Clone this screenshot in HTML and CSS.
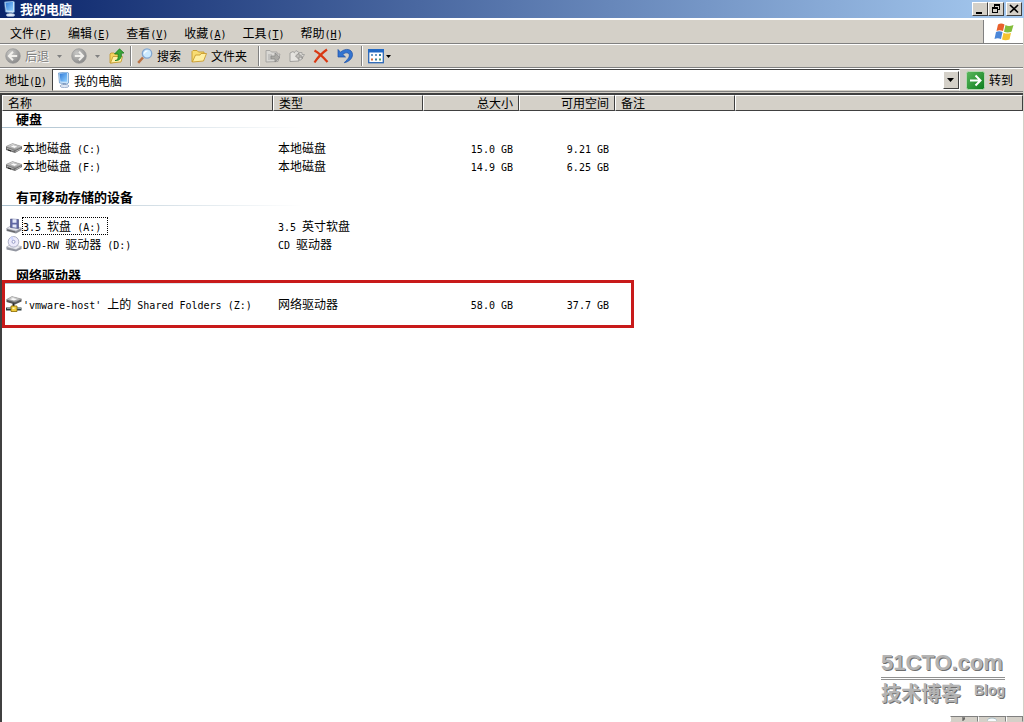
FILE: index.html
```html
<!DOCTYPE html>
<html lang="zh-CN">
<head>
<meta charset="utf-8">
<title>我的电脑</title>
<link rel="stylesheet" href="styles.css">
</head>
<body>
<svg class="defs" aria-hidden="true">
  <defs>
    <linearGradient id="screen" x1="0" y1="0" x2="1" y2="1"><stop offset="0" stop-color="#2f78d6"/><stop offset="1" stop-color="#8fd0ff"/></linearGradient>
    <radialGradient id="ball" cx=".35" cy=".3" r=".8"><stop offset="0" stop-color="#c8c8c6"/><stop offset="1" stop-color="#858585"/></radialGradient>
    <linearGradient id="go" x1="0" y1="0" x2="1" y2="1"><stop offset="0" stop-color="#5cb85e"/><stop offset="1" stop-color="#0c7d1d"/></linearGradient>
    <linearGradient id="metal" x1="0" y1="0" x2="0" y2="1"><stop offset="0" stop-color="#e6e6e6"/><stop offset="1" stop-color="#909090"/></linearGradient>
    <symbol id="pc" viewBox="0 0 16 16">
      <path d="M2.500 1L11 0l1.500 1v10l-2 1-7-1z" fill="#c9e2f8" stroke="#5e8fc4" stroke-width=".7"/>
      <path d="M3.500 1.800l7.500-1v9L4.500 9.500z" fill="url(#screen)"/>
      <path d="M7 11l3 .5V13H7z" fill="#7d97bd"/>
      <ellipse cx="8.500" cy="14" rx="4.500" ry="1.600" fill="#dfe8f5" stroke="#7f98bd" stroke-width=".7"/>
    </symbol>
    <symbol id="drive" viewBox="0 0 16 16">
      <path d="M0 6.500L6.500 3.500 16 6.500V9L9 13 0 10z" fill="#6d6d6d"/>
      <path d="M0 6.500L6.500 3.500 16 6.500 9 10z" fill="url(#metal)" stroke="#979797" stroke-width=".5"/>
      <path d="M4 6.500l3.500-1.500 4.500 1.400-3.500 1.800z" fill="#fafafa" stroke="#a7a7a7" stroke-width=".5"/>
      <path d="M1 8.300l6.500 2.300M9.500 11.500L15 8.700" stroke="#c4c4c4" stroke-width=".8"/>
      <path d="M2 10l3 1" stroke="#222" stroke-width="1"/>
    </symbol>
    <symbol id="floppy" viewBox="0 0 16 16">
      <path d="M.5 10.500l4-2.500 11 2v2.500L10 15.500.5 13z" fill="#8c8f99"/>
      <path d="M.5 10.500l4-2.500 11 2-5.500 3z" fill="#e8e8ee" stroke="#a5a7b4" stroke-width=".5"/>
      <path d="M4.500 1l8 .5v9l-8-1z" fill="#6067a4" stroke="#414879" stroke-width=".6"/>
      <path d="M6.500 1.200h4v3.500h-4zM6.500 6.500h4v3.300l-4-.5z" fill="#e6eafa"/>
      <path d="M1 12l8 2" stroke="#555" stroke-width=".8"/>
    </symbol>
    <symbol id="disc" viewBox="0 0 16 16">
      <path d="M.5 11l4-2.500 11 2V13L10 15.500.5 13.500z" fill="#9295a0"/>
      <path d="M.5 11l4-2.500 11 2L10 13.500z" fill="#ececf1" stroke="#a5a7b4" stroke-width=".5"/>
      <circle cx="7.500" cy="5.800" r="5.300" fill="#eceafb" stroke="#9a9eb8" stroke-width=".8"/>
      <path d="M7.500 5.800L4 1.800a5 5 0 0 1 3-1.200z" fill="#cfd6ff"/>
      <circle cx="7.500" cy="5.800" r="1.500" fill="#fff" stroke="#8288ba" stroke-width=".8"/>
    </symbol>
    <symbol id="netdrive" viewBox="0 0 16 16">
      <path d="M.5 3.500L6 .5 15.500 3v2.500L9 8.500.5 6z" fill="#555"/>
      <path d="M.5 3.500L6 .5 15.500 3 9 6z" fill="url(#metal)" stroke="#999" stroke-width=".5"/>
      <path d="M4 3.300l3-1.300 4 1.200-3 1.300z" fill="#fafafa"/>
      <path d="M7.500 7.500v4" stroke="#222" stroke-width="2"/>
      <path d="M0 13h15.500" stroke="#2d3b3d" stroke-width="3"/>
      <path d="M1 12.500h14" stroke="#8da3a0" stroke-width="1"/>
      <path d="M5 10h6v5.500H5z" fill="#f2cd3a" stroke="#8a6900" stroke-width=".8"/>
      <path d="M6.500 11.500h2v1.500h-2z" fill="#fff6bc"/>
    </symbol>
    <symbol id="back" viewBox="0 0 16 16">
      <circle cx="8" cy="8" r="7.300" fill="url(#ball)" stroke="#969696" stroke-width=".7"/>
      <path d="M8 3.800L3.900 8 8 12.200M4.300 8h7.900" fill="none" stroke="#f1f0ec" stroke-width="2"/>
    </symbol>
    <symbol id="forward" viewBox="0 0 16 16">
      <circle cx="8" cy="8" r="7.300" fill="url(#ball)" stroke="#969696" stroke-width=".7"/>
      <path d="M8 3.800L12.100 8 8 12.200M3.800 8h7.900" fill="none" stroke="#f1f0ec" stroke-width="2"/>
    </symbol>
    <symbol id="folder" viewBox="0 0 16 16">
      <path d="M1 14V3.500l1-1h4L7.500 4H13v3" fill="#f8dc72" stroke="#c69a29" stroke-width=".9"/>
      <path d="M1.300 14L4.500 7H9l1-1.500h5.500L12.500 13z" fill="#fff0a3" stroke="#c99b2b" stroke-width=".9"/>
    </symbol>
    <symbol id="upfolder" viewBox="0 0 16 16">
      <path d="M1 15V6l1-1h3l1 1h6v7L2 15z" fill="#f3d45f" stroke="#c0952a" stroke-width=".8"/>
      <path d="M1.500 15L4 8.500h9.500L12 14z" fill="#fff1a5" stroke="#c0952a" stroke-width=".8"/>
      <path d="M6 12.500c3 0 3.500-3 3-6.500H5.500L10.500.8 15 5l-2.800.3c.8 4-1 7.700-6.200 7.200z" fill="#3aa637" stroke="#14751a" stroke-width=".7"/>
    </symbol>
    <symbol id="search" viewBox="0 0 16 16">
      <path d="M1.200 14.800L6 9.500" stroke="#ba7245" stroke-width="2.500"/>
      <circle cx="10" cy="5.500" r="4.700" fill="#cbeaff" stroke="#84a6cf" stroke-width="1.300"/>
      <path d="M7.500 5.500a2.700 2.700 0 0 1 3-2.500" fill="none" stroke="#fff" stroke-width="1.200"/>
    </symbol>
    <symbol id="moveto" viewBox="0 0 16 16">
      <path d="M1 14V2.500h4L6.500 4H12v2h3l-2 7.500z" fill="#d9d8d4" stroke="#a3a29f" stroke-width=".9"/>
      <path d="M3 7h4M3 9h3M3 11h3" stroke="#aaa"/>
      <path d="M6 8h4V5l5 4.500-5 4.500v-3H6z" fill="#aaa9a5" stroke="#858482" stroke-width=".7"/>
    </symbol>
    <symbol id="copyto" viewBox="0 0 16 16">
      <path d="M1 13.500V5l3-1.500 2 1.700h2.500L10 13z" fill="#e6e4e0" stroke="#9b9a97" stroke-width=".9"/>
      <path d="M5 5l2-2.500 3 2h3v2h2.500L12 12H9" fill="#dedcd8" stroke="#a3a29f" stroke-width=".9"/>
      <path d="M6.500 8L10 5v2c2.500 0 3.500 1.200 3.500 3.500C12.500 9.300 11.500 9 10 9v2.500z" fill="#bdbbb7" stroke="#858482" stroke-width=".7"/>
    </symbol>
    <symbol id="delete" viewBox="0 0 16 16">
      <path d="M1.500 2.500C6 5 11 10 14.500 14M14 1.500C9 5 5 9 1.500 14.500" fill="none" stroke="#d93812" stroke-width="2.200"/>
    </symbol>
    <symbol id="undo" viewBox="0 0 16 16">
      <path d="M1 1.500V9h7.500L5.800 6.500C9 3.500 13 5 12.300 8c-.5 3-3 4-5 6.700 4-.7 8.300-4 8.200-8.200C15.300 1 8.500-.5 3.500 4.200z" fill="#3374d0" stroke="#1d4fa3" stroke-width=".7"/>
    </symbol>
    <symbol id="views" viewBox="0 0 16 16">
      <rect x=".7" y="1.700" width="14.600" height="13" fill="#fff" stroke="#2a66b5" stroke-width="1.300"/>
      <path d="M0 1h16v3.500H0z" fill="#2369c4"/>
      <path d="M3 6h2v2H3zM7 6h2v2H7z" fill="#6d9ac6"/><path d="M11 6h2v2h-2zM7 10.500h2v2H7z" fill="#387da0"/>
      <path d="M3 10.500h2v2H3z" fill="#d1693c"/><path d="M11 10.500h2v2h-2z" fill="#52a060"/>
    </symbol>
    <symbol id="caret" viewBox="0 0 5 3"><path d="M0 0h5L2.500 3z" fill="currentColor"/></symbol>
  </defs>
</svg>

<main class="window">
  <header class="titlebar">
    <svg class="icon"><use href="#pc"/></svg>
    <h1 class="caption">我的电脑</h1>
    <div class="sysbuttons">
      <button class="sysbtn" aria-label="最小化"><svg viewBox="0 0 12 10"><path d="M2 8h6v2H2z"/></svg></button>
      <button class="sysbtn" aria-label="还原"><svg viewBox="0 0 12 10"><path d="M4 0h6v6H8V5h1V2H5v1H4zM2 3h6v6H2zM3 5v3h4V5z" fill-rule="evenodd"/></svg></button>
      <button class="sysbtn close" aria-label="关闭"><svg viewBox="0 0 12 10"><path d="M2 1l8 7.500M10 1L2 8.500" stroke="#000" stroke-width="1.700"/></svg></button>
    </div>
  </header>

  <nav class="menubar">
    <button class="menu">文件<span class="latin">(<u>F</u>)</span></button>
    <button class="menu">编辑<span class="latin">(<u>E</u>)</span></button>
    <button class="menu">查看<span class="latin">(<u>V</u>)</span></button>
    <button class="menu">收藏<span class="latin">(<u>A</u>)</span></button>
    <button class="menu">工具<span class="latin">(<u>T</u>)</span></button>
    <button class="menu">帮助<span class="latin">(<u>H</u>)</span></button>
    <div class="brand">
      <svg class="flag" viewBox="0 0 20 18">
        <path d="M4 1.500q3-2 6.500 0L9 8q-3.500-1.700-6.500 0z" fill="#e8602c"/>
        <path d="M11.500 2q3 1.800 8 0L17.500 8.700q-4 1.500-7.500 0z" fill="#83bd3b"/>
        <path d="M2 9q3-1.500 6.500 0L7 16Q3.500 14.300.5 16z" fill="#4a86d8"/>
        <path d="M9.500 9.700q3.500 1.800 7.500 0L15.500 16.500q-4 1.500-7.500 0z" fill="#f5c330"/>
      </svg>
    </div>
  </nav>

  <div class="toolbar">
    <button class="tool off" disabled><svg class="icon"><use href="#back"/></svg>后退</button>
    <button class="drop off" disabled aria-label="后退列表"><svg><use href="#caret"/></svg></button>
    <button class="tool off" disabled aria-label="前进"><svg class="icon"><use href="#forward"/></svg></button>
    <button class="drop off" disabled aria-label="前进列表"><svg><use href="#caret"/></svg></button>
    <button class="tool up" aria-label="向上"><svg class="icon"><use href="#upfolder"/></svg></button>
    <span class="sep"></span>
    <button class="tool"><svg class="icon"><use href="#search"/></svg>搜索</button>
    <button class="tool next"><svg class="icon"><use href="#folder"/></svg>文件夹</button>
    <span class="sep wide"></span>
    <button class="tool" disabled aria-label="移至"><svg class="icon"><use href="#moveto"/></svg></button>
    <button class="tool" disabled aria-label="复制到"><svg class="icon"><use href="#copyto"/></svg></button>
    <button class="tool" aria-label="删除"><svg class="icon"><use href="#delete"/></svg></button>
    <button class="tool" aria-label="撤消"><svg class="icon"><use href="#undo"/></svg></button>
    <span class="sep"></span>
    <button class="tool views" aria-label="查看"><svg class="icon"><use href="#views"/></svg><svg class="caret"><use href="#caret"/></svg></button>
  </div>

  <div class="address">
    <label class="address-label" for="path">地址<span class="latin">(<u>D</u>)</span></label>
    <div class="combo">
      <svg class="icon"><use href="#pc"/></svg>
      <input class="path" id="path" type="text" value="我的电脑">
      <button class="open" aria-label="打开列表"><svg viewBox="0 0 7 4"><path d="M0 0h7L3.500 4z"/></svg></button>
    </div>
    <button class="goto"><svg class="go" viewBox="0 0 19 19"><rect x=".5" y=".5" width="18" height="18" rx="2" fill="url(#go)" stroke="#b4d9b2"/><path d="M4 9.500h10M9.500 4.500l5 5-5 5" fill="none" stroke="#fff" stroke-width="2"/></svg>转到</button>
  </div>

  <section class="content">
    <table class="files">
      <colgroup><col class="c-name"><col class="c-type"><col class="c-size"><col class="c-size"><col class="c-note"><col></colgroup>
      <thead>
        <tr><th>名称</th><th>类型</th><th class="num">总大小</th><th class="num">可用空间</th><th>备注</th><td class="blank"></td></tr>
      </thead>
      <tbody>
        <tr><th class="group first" colspan="6"><span>硬盘</span></th></tr>
        <tr><td><div class="item"><svg class="icon"><use href="#drive"/></svg><span class="name">本地磁盘<span class="latin"> (C:)</span></span></div></td><td>本地磁盘</td><td class="num"><span class="latin">15.0 GB</span></td><td class="num"><span class="latin">9.21 GB</span></td></tr>
        <tr><td><div class="item"><svg class="icon"><use href="#drive"/></svg><span class="name">本地磁盘<span class="latin"> (F:)</span></span></div></td><td>本地磁盘</td><td class="num"><span class="latin">14.9 GB</span></td><td class="num"><span class="latin">6.25 GB</span></td></tr>
      </tbody>
      <tbody>
        <tr><th class="group" colspan="6"><span>有可移动存储的设备</span></th></tr>
        <tr><td><div class="item"><svg class="icon"><use href="#floppy"/></svg><span class="name focused"><span class="latin">3.5 </span>软盘<span class="latin"> (A:)</span></span></div></td><td><span class="latin">3.5 </span>英寸软盘</td></tr>
        <tr><td><div class="item"><svg class="icon"><use href="#disc"/></svg><span class="name"><span class="latin">DVD-RW </span>驱动器<span class="latin"> (D:)</span></span></div></td><td><span class="latin">CD </span>驱动器</td></tr>
      </tbody>
      <tbody>
        <tr><th class="group" colspan="6"><span>网络驱动器</span></th></tr>
        <tr><td><div class="item"><svg class="icon"><use href="#netdrive"/></svg><span class="name"><span class="latin">'vmware-host' </span>上的<span class="latin"> Shared Folders (Z:)</span></span></div></td><td>网络驱动器</td><td class="num"><span class="latin">58.0 GB</span></td><td class="num"><span class="latin">37.7 GB</span></td></tr>
      </tbody>
    </table>
    <div class="marker"></div>
    <div class="watermark">
      <div class="site">51CTO.com</div>
      <div class="tagline"><span>技术博客</span><span class="blog">Blog</span></div>
    </div>
    <div class="langbar">
      <span class="cell"><svg viewBox="0 0 10 4"><path d="M4 4V2h2M3 1h3" stroke="#444" fill="none"/></svg></span>
      <span class="cell"><svg viewBox="0 0 10 4"><ellipse cx="5" cy="4" rx="5" ry="3" fill="#f6fbfd" stroke="#a9bcc4"/></svg></span>
      <span class="cell last"></span>
    </div>
  </section>
</main>
</body>
</html>
```

FILE: styles.css
```css
* { box-sizing: border-box; }

body {
  margin: 0;
  background: #d4d0c8;
  color: #000;
  font: 12px/16px "Noto Sans CJK SC", sans-serif;
}

button, input { font: inherit; color: inherit; margin: 0; }
button { padding: 0; border: 0; background: none; white-space: nowrap; }
svg { display: block; flex: none; }
.defs { position: absolute; width: 0; height: 0; }
.icon { width: 16px; height: 16px; }
.latin { font-family: "DejaVu Sans Mono", monospace; font-size: 10px; line-height: 10px; white-space: pre; }

.window { display: flex; flex-direction: column; height: 100vh; overflow: hidden; }

.titlebar {
  display: flex;
  align-items: center;
  height: 18px;
  padding: 0 2px;
  background: linear-gradient(90deg, #0a246a, #a6caf0);
}
.caption { flex: 1; margin: 0 0 0 2px; color: #fff; font-size: 13px; line-height: 16px; }
.sysbuttons { display: flex; }
.sysbtn {
  width: 16px;
  height: 14px;
  padding: 1px;
  background: #d4d0c8;
  border: 1px solid;
  border-color: #fff #404040 #404040 #fff;
}
.sysbtn.close { margin-left: 2px; }
.sysbtn svg { width: 12px; height: 10px; }

.menubar {
  display: flex;
  height: 26px;
  margin-right: 1px;
  padding-left: 2px;
  border-top: 2px solid #fff;
  border-bottom: 1px solid #808080;
}
.menu { padding: 2px 8px 0; }
.brand {
  display: flex;
  align-items: center;
  justify-content: center;
  width: 40px;
  margin-left: auto;
  background: #fff;
  border-left: 1px solid #808080;
}
.flag { width: 20px; height: 18px; }

.toolbar {
  display: flex;
  align-items: center;
  height: 24px;
  margin-right: 1px;
  padding-left: 5px;
  border-top: 1px solid #fff;
  border-bottom: 1px solid #808080;
}
.tool { display: flex; align-items: center; gap: 4px; margin-right: 8px; }
.tool.off { margin-right: 6px; color: #808080; text-shadow: 1px 1px #fff; }
.tool.up { margin-right: 5px; }
.tool.next { margin-left: 2px; }
.drop { width: 10px; margin-right: 6px; padding-left: 2px; }
.drop svg, .caret { width: 5px; height: 3px; }
.drop.off { color: #808080; }
.sep { width: 2px; height: 20px; margin-right: 5px; border-left: 1px solid #808080; border-right: 1px solid #fff; }
.sep.wide { margin-left: 3px; }
.tool.views { gap: 2px; }

.address {
  display: flex;
  align-items: center;
  height: 24px;
  margin-right: 1px;
  padding-left: 5px;
  border-top: 1px solid #fff;
  border-bottom: 1px solid #808080;
}
.address-label { width: 47px; white-space: nowrap; }
.combo {
  flex: 1;
  display: flex;
  align-items: center;
  height: 22px;
  padding-left: 3px;
  background: #fff;
  border: 1px solid;
  border-color: #404040 #fff #d4d0c8 #404040;
}
.path { flex: 1; min-width: 0; height: 18px; padding: 0 0 0 2px; border: 0; background: none; outline: 0; }
.open {
  display: grid;
  place-items: center;
  width: 16px;
  height: 18px;
  background: #d4d0c8;
  border: 1px solid;
  border-color: #fff #404040 #404040 #fff;
}
.open svg { width: 7px; height: 4px; }
.goto { display: flex; align-items: center; gap: 4px; margin: 0 10px 0 6px; }
.go { width: 19px; height: 19px; }

.content {
  position: relative;
  flex: 1;
  margin: 1px 1px 0 0;
  background: #fff;
  border-left: 2px solid #404040;
  border-top: 2px solid #404040;
}
.files { width: 100%; table-layout: fixed; border-collapse: separate; border-spacing: 0; text-align: left; }
.c-name { width: 271px; }
.c-type { width: 150px; }
.c-size { width: 96px; }
.c-note { width: 120px; }
.files thead th, .blank {
  height: 16px;
  padding: 0 5px;
  line-height: 14px;
  font-weight: normal;
  background: #d4d0c8;
  border: 1px solid;
  border-color: #fff #404040 #404040 #fff;
}
.files td { height: 18px; padding: 0 5px; line-height: 16px; white-space: nowrap; }
.files td:first-child { padding-left: 4px; }
.files td.blank { height: 16px; }
.files td.num { padding-right: 6px; text-align: right; }
.files th.num { text-align: right; }
.item { display: flex; align-items: center; gap: 1px; }
.name { line-height: 16px; }
.name.focused { padding-right: 6px; outline: 1px dotted #000; }
.group { padding: 14px 0 11px; font-size: 13px; line-height: 16px; }
.group.first { padding-top: 0; }
.group span {
  display: block;
  width: 300px;
  padding-left: 14px;
  border-bottom: 1px solid;
  border-image: linear-gradient(90deg, #a9bfcd, #fff) 1;
}

.marker { position: absolute; left: 0; top: 185px; width: 632px; height: 48px; border: 3px solid #c81a1a; }

.watermark {
  position: absolute;
  right: 18px;
  bottom: 16px;
  width: 124px;
  color: #b4b4b4;
  font-weight: bold;
  text-shadow: 1px 1px #707070;
}
.site { font: bold 22px/28px "Liberation Sans", sans-serif; border-bottom: 3px double #909090; }
.tagline { display: flex; justify-content: space-between; font-size: 20px; line-height: 26px; }
.blog { font: bold 14px/20px "Liberation Sans", sans-serif; }

.langbar { position: absolute; right: 0; bottom: 0; display: flex; height: 6px; }
.cell { width: 28px; padding-left: 8px; background: #d4d0c8; border: 1px solid; border-color: #808080 #808080 #d4d0c8 #fff; }
.cell svg { width: 10px; height: 4px; }
.cell.last { width: 17px; }
```
